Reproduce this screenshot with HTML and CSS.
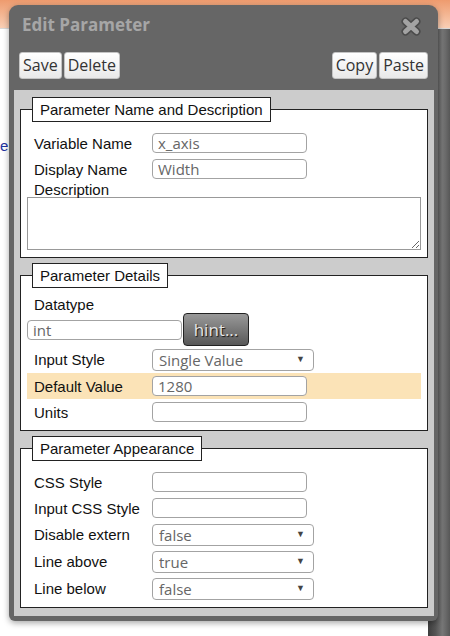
FILE: index.html
```html
<!DOCTYPE html>
<html lang="en">
<head>
  <meta charset="UTF-8" />
  <meta name="viewport" content="width=device-width, initial-scale=1" />
  <title>Edit Parameter</title>
  <link rel="stylesheet" href="styles.css">
</head>
<body>
  <div class="page">
    <div class="topbar"></div>
    <div class="pagebody">
      <div class="pagemain"><span class="clipped">e</span></div>
      <div class="sidestrip"></div>
    </div>
  </div>

  <div class="dialog" role="dialog" aria-label="Edit Parameter">
    <div class="dlg-title">
      <span>Edit Parameter</span>
      <svg class="close" width="20" height="19" viewBox="0 0 20 19" aria-label="Close">
        <path d="M4.5 4.5 L15.5 14.5 M15.5 4.5 L4.5 14.5" stroke="#4b4b4b" stroke-width="8" stroke-linecap="round" fill="none"/>
        <path d="M4.5 4.5 L15.5 14.5 M15.5 4.5 L4.5 14.5" stroke="#a3a3a3" stroke-width="5" stroke-linecap="round" fill="none"/>
      </svg>
    </div>

    <div class="dlg-tools">
      <div class="grp">
        <button class="btn">Save</button>
        <button class="btn">Delete</button>
      </div>
      <div class="grp">
        <button class="btn">Copy</button>
        <button class="btn">Paste</button>
      </div>
    </div>

    <div class="dlg-panel">
      <fieldset>
        <legend>Parameter Name and Description</legend>
        <div class="row">
          <label>Variable Name</label>
          <input type="text" value="x_axis" />
        </div>
        <div class="row">
          <label>Display Name</label>
          <input type="text" value="Width" />
        </div>
        <div class="row row-desc">
          <label>Description</label>
        </div>
        <textarea></textarea>
      </fieldset>

      <fieldset>
        <legend>Parameter Details</legend>
        <div class="row row-short">
          <label>Datatype</label>
        </div>
        <div class="row row-type">
          <input type="text" value="int" />
          <button class="hint">hint...</button>
        </div>
        <div class="row row-sel">
          <label>Input Style</label>
          <span class="selwrap"><select><option>Single Value</option></select></span>
        </div>
        <div class="row row-hl">
          <label>Default Value</label>
          <input type="text" value="1280" />
        </div>
        <div class="row">
          <label>Units</label>
          <input type="text" value="" />
        </div>
      </fieldset>

      <fieldset>
        <legend>Parameter Appearance</legend>
        <div class="row">
          <label>CSS Style</label>
          <input type="text" value="" />
        </div>
        <div class="row">
          <label>Input CSS Style</label>
          <input type="text" value="" />
        </div>
        <div class="row row-sel">
          <label>Disable extern</label>
          <span class="selwrap"><select><option>false</option><option>true</option></select></span>
        </div>
        <div class="row row-sel">
          <label>Line above</label>
          <span class="selwrap"><select><option>true</option><option>false</option></select></span>
        </div>
        <div class="row row-sel">
          <label>Line below</label>
          <span class="selwrap"><select><option>false</option><option>true</option></select></span>
        </div>
      </fieldset>
    </div>
  </div>
</body>
</html>
```

FILE: styles.css
```css
body {
  margin: 0;
  height: 636px;
  overflow: hidden;
  background: #fff;
  font-family: 'Liberation Sans', Arial, sans-serif;
}
.page {
  height: 636px;
  display: flex;
  flex-direction: column;
}
.topbar {
  height: 28px;
  background: linear-gradient(#ee9b6e, #f9cfb5);
  border-bottom: 1px solid #d8d8d8;
}
.pagebody {
  flex: 1;
  display: flex;
}
.pagemain {
  flex: 1;
  padding-top: 108px;
  font-size: 15px;
  color: #2233a0;
}
.clipped {
  margin-left: 0;
}
.sidestrip {
  width: 22px;
  background: linear-gradient(to right, #3e3e3e 0%, #555 35%, #777 65%, #6a6a6a 80%, #575757 100%);
}

.dialog {
  position: absolute;
  left: 9px;
  top: 5px;
  width: 429px;
  box-sizing: border-box;
  background: #666;
  border-radius: 9px 9px 6px 6px;
  padding: 0 4px 5px 5px;
  box-shadow: 0 2px 6px rgba(0,0,0,0.35);
}
.dlg-title {
  height: 38px;
  display: flex;
  align-items: center;
  justify-content: space-between;
  padding: 0 13px 0 8px;
  font-family: 'Open Sans', sans-serif;
  font-weight: 700;
  font-size: 17px;
  color: #a6a6a6;
}
.close {
  margin-top: 4px;
}
.dlg-tools {
  display: flex;
  justify-content: space-between;
  padding: 9px 6px 11px 5px;
}
.grp {
  display: flex;
  gap: 2px;
}
.btn {
  font-family: 'Open Sans', sans-serif;
  font-size: 16px;
  line-height: 21px;
  padding: 2px 3px;
  color: #333;
  background: linear-gradient(#ffffff, #e9e9e9);
  border: 1px solid #c4c4c4;
  border-radius: 3px;
  margin: 0;
}

.dlg-panel {
  background: #ccc;
  padding: 7px 6px 8px 6px;
}
fieldset {
  margin: 0;
  min-width: 0;
  background: #fff;
  border: 1px solid #222;
  padding: 8px 6px 5px 6px;
}
fieldset + fieldset {
  margin-top: 5px;
}
legend {
  margin-left: 5px;
  padding: 2px 7px;
  border: 1px solid #222;
  background: #fff;
  font-size: 15px;
  line-height: 19px;
  color: #111;
}
.row {
  display: flex;
  align-items: center;
  height: 26px;
}
.row label {
  width: 125px;
  box-sizing: border-box;
  padding-left: 7px;
  font-size: 15px;
  color: #111;
}
.row-desc {
  height: 15px;
}
.row-short {
  height: 17px;
}
.row-type {
  height: 33px;
}
.row-sel {
  height: 27px;
}
.row-hl {
  background: #fbe3b7;
}
input[type="text"] {
  width: 155px;
  height: 20px;
  box-sizing: border-box;
  margin: 0;
  border: 1px solid #a3a3a3;
  border-radius: 4px;
  padding: 0 5px;
  font-family: 'Open Sans', sans-serif;
  font-size: 15px;
  color: #666;
  background: #fff;
}
.hint {
  width: 66px;
  height: 33px;
  margin: 0 0 0 1px;
  border: 1px solid #222;
  border-radius: 4px;
  background: linear-gradient(#999, #585858);
  font-family: 'Open Sans', sans-serif;
  font-size: 17px;
  color: #e6e6e6;
  text-shadow: 1px 1px 1px #111;
  padding: 0;
}
.selwrap {
  position: relative;
  display: block;
  width: 162px;
  height: 22px;
}
.selwrap select {
  appearance: none;
  -webkit-appearance: none;
  width: 100%;
  height: 22px;
  margin: 0;
  padding: 0 6px;
  border: 1px solid #a3a3a3;
  border-radius: 4px;
  background: #fff;
  font-family: 'Open Sans', sans-serif;
  font-size: 15px;
  color: #666;
}
.selwrap::after {
  content: "\25BC";
  position: absolute;
  right: 9px;
  top: 5px;
  font-size: 9px;
  color: #444;
  pointer-events: none;
}
textarea {
  display: block;
  width: 100%;
  height: 53px;
  box-sizing: border-box;
  margin: 0 0 2px 0;
  border: 1px solid #999;
  padding: 2px;
}
```
